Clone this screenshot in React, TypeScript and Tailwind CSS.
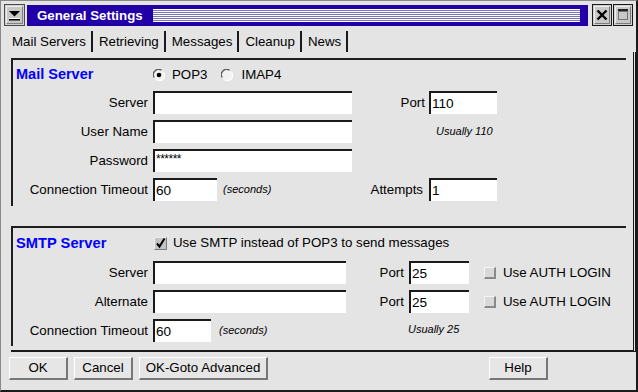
import React from "react";

function Field({ cls, value, pw }: { cls: string; value?: string; pw?: boolean }) {
  return (
    <div
      className={`${cls} h-[23px] bg-white border-t-2 border-l-2 border-[#1a1a1a] flex ${pw ? "items-start pt-[1px]" : "items-center"} pl-[1px] text-black`}
    >
      {pw ? <span className="text-[12px] leading-[14px] tracking-[-0.5px]">******</span> : <span className="text-[13.6px] leading-none">{value}</span>}
    </div>
  );
}

function Radio({ on }: { on?: boolean }) {
  return (
    <svg width="12" height="12" viewBox="0 0 12 12" className="shrink-0">
      <circle cx="6" cy="6" r="5.5" fill="#f2f2f2" />
      <path d="M1.2 8.5 A5.3 5.3 0 0 1 8.5 1.2" fill="none" stroke="#5a5a5a" strokeWidth="1.3" />
      <path d="M3.5 10.8 A5.3 5.3 0 0 0 10.8 3.5" fill="none" stroke="#ffffff" strokeWidth="1.3" />
      {on && <circle cx="6" cy="6" r="2.3" fill="#000" />}
    </svg>
  );
}

function Check() {
  return (
    <svg width="13" height="13" viewBox="0 0 13 13" className="shrink-0">
      <rect x="0" y="0" width="13" height="13" fill="#c4c4c4" />
      <path d="M0.5 12.5 V0.5 H12.5" fill="none" stroke="#ededed" strokeWidth="1" />
      <path d="M0.5 12.5 H12.5 V0.5" fill="none" stroke="#7c7c7c" strokeWidth="1" />
      <path d="M3 6.5 L5.5 9.5 L10.5 1.5" fill="none" stroke="#000" strokeWidth="2" />
    </svg>
  );
}

function AuthBox() {
  return (
    <div className="w-[12px] h-[12px] shrink-0 bg-[#d9d9d9] border-t border-l border-t-[#f4f4f4] border-l-[#f4f4f4] border-b-2 border-r-2 border-b-[#8a8a8a] border-r-[#8a8a8a]" />
  );
}

function Btn({ cls, label }: { cls: string; label: string }) {
  return (
    <div
      className={`${cls} h-[23px] flex items-center justify-center text-[13.3px] text-black border-t border-l border-t-white border-l-white border-b-2 border-r-2 border-b-[#777] border-r-[#777] bg-[#e6e6e6]`}
    >
      {label}
    </div>
  );
}

export default function App() {
  return (
    <div className="w-[638px] h-[392px] bg-[#e4e4e4] border-l border-t border-l-[#8a8a8a] border-t-[#8a8a8a] border-r-2 border-b-2 border-r-[#1a1a1a] border-b-[#1a1a1a] font-['Liberation_Sans',Arial,sans-serif] text-black overflow-hidden select-none">
      {/* Title row */}
      <div className="flex items-start mt-[3px] ml-[3px] mr-[3px] h-[22px]">
        <div className="w-[21px] h-[22px] border border-[#4a4a4a] bg-[#cfcfcf] flex items-center justify-center">
          <svg width="17" height="18" viewBox="0 0 17 18">
            <rect x="0" y="0" width="17" height="18" fill="#c8c8c8" />
            <path d="M0.5 17.5 V0.5 H16.5" fill="none" stroke="#f0f0f0" />
            <path d="M0.5 17.5 H16.5 V0.5" fill="none" stroke="#808080" />
            <polygon points="3,5 14,5 8.5,10.5" fill="#000" />
            <rect x="3" y="12" width="11" height="1" fill="#fff" />
            <rect x="3" y="13" width="11" height="1.5" fill="#000" />
          </svg>
        </div>
        <div className="ml-[2px] mt-[1px] w-[561px] h-[21px] bg-[#2200a8] flex items-center">
          <span className="pl-[10px] text-white font-bold text-[13.3px] leading-none whitespace-nowrap">General Settings</span>
          <div className="ml-[10px] mr-[8px] flex-1 h-[13px] bg-[repeating-linear-gradient(to_bottom,#ffffff_0px,#ffffff_1px,#7878b4_1px,#7878b4_2px)]" />
        </div>
        <div className="ml-[4px] w-[20px] h-[22px] border border-[#1a1a1a] bg-[#d0d0d0] flex items-center justify-center">
          <svg width="16" height="18" viewBox="0 0 16 18">
            <rect x="0" y="0" width="16" height="18" fill="#c8c8c8" />
            <path d="M0.5 17.5 V0.5 H15.5" fill="none" stroke="#f0f0f0" />
            <path d="M0.5 17.5 H15.5 V0.5" fill="none" stroke="#7a7a7a" />
            <path d="M3.5 4.5 L12.5 13.5 M12.5 4.5 L3.5 13.5" stroke="#000" strokeWidth="2.4" />
          </svg>
        </div>
        <div className="ml-[1px] w-[20px] h-[22px] border border-[#1a1a1a] bg-[#d0d0d0] flex items-center justify-center">
          <svg width="16" height="18" viewBox="0 0 16 18">
            <rect x="0" y="0" width="16" height="18" fill="#c8c8c8" />
            <path d="M0.5 17.5 V0.5 H15.5" fill="none" stroke="#f0f0f0" />
            <path d="M0.5 17.5 H15.5 V0.5" fill="none" stroke="#7a7a7a" />
            <rect x="3" y="3" width="10" height="2" fill="#222" />
            <rect x="3.5" y="5.5" width="9" height="8" fill="none" stroke="#222" strokeDasharray="1 1" />
          </svg>
        </div>
      </div>

      {/* Tabs */}
      <div className="flex mt-[5px] ml-[5px] h-[21px] text-[13.3px] leading-none">
        {["Mail Servers", "Retrieving", "Messages", "Cleanup", "News"].map((t) => (
          <div key={t} className="h-[21px] pl-[6px] pr-[5px] pt-[4px] border-r-2 border-r-[#1a1a1a] whitespace-nowrap">
            {t}
          </div>
        ))}
      </div>

      {/* Panel */}
      <div className="ml-[10px] w-[625px] h-[300px] border-r-[3px] border-double border-r-[#1a1a1a] border-b-2 border-b-[#1a1a1a] pt-[6px]">
        {/* Mail Server group */}
        <div className="w-[615px] h-[148px] border-t-2 border-l-2 border-[#1e1e1e] text-[13.3px] leading-none">
          <div className="h-[29px] flex items-center">
            <div className="w-[140px] pl-[3px] text-[#0000ff] font-bold text-[14.5px]">Mail Server</div>
            <Radio on />
            <span className="ml-[7px]">POP3</span>
            <div className="ml-[14px]"><Radio /></div>
            <span className="ml-[8px]">IMAP4</span>
          </div>
          <div className="mt-[2px] flex flex-col gap-[6px]">
            <div className="flex items-center h-[23px]">
              <div className="w-[135px] text-right">Server</div>
              <div className="ml-[5px]"><Field cls="w-[199px]" /></div>
              <div className="w-[73px] text-right">Port</div>
              <div className="ml-[4px]"><Field cls="w-[68px]" value="110" /></div>
            </div>
            <div className="flex items-center h-[23px]">
              <div className="w-[135px] text-right">User Name</div>
              <div className="ml-[5px]"><Field cls="w-[199px]" /></div>
              <div className="ml-[84px] italic text-[11px]">Usually 110</div>
            </div>
            <div className="flex items-center h-[23px]">
              <div className="w-[135px] text-right">Password</div>
              <div className="ml-[5px]"><Field cls="w-[199px]" pw /></div>
            </div>
            <div className="flex items-center h-[23px]">
              <div className="w-[135px] text-right whitespace-nowrap">Connection Timeout</div>
              <div className="ml-[5px]"><Field cls="w-[64px]" value="60" /></div>
              <div className="w-[206px] flex items-center">
                <span className="pl-[6px] italic text-[11px]">(seconds)</span>
                <span className="ml-auto">Attempts</span>
              </div>
              <div className="ml-[6px]"><Field cls="w-[68px]" value="1" /></div>
            </div>
          </div>
        </div>

        {/* SMTP group */}
        <div className="mt-[20px] w-[615px] h-[120px] border-t-2 border-l-2 border-[#1e1e1e] text-[13.3px] leading-none">
          <div className="h-[30px] flex items-center">
            <div className="w-[141px] pl-[3px] text-[#0000ff] font-bold text-[14.7px] whitespace-nowrap">SMTP Server</div>
            <Check />
            <span className="ml-[6px] whitespace-nowrap">Use SMTP instead of POP3 to send messages</span>
          </div>
          <div className="mt-[3px] flex flex-col gap-[6px]">
            {["Server", "Alternate"].map((l) => (
              <div key={l} className="flex items-center h-[23px]">
                <div className="w-[135px] text-right">{l}</div>
                <div className="ml-[5px]"><Field cls="w-[193px]" /></div>
                <div className="w-[58px] text-right">Port</div>
                <div className="ml-[5px]"><Field cls="w-[60px]" value="25" /></div>
                <div className="ml-[15px]"><AuthBox /></div>
                <span className="ml-[7px] whitespace-nowrap">Use AUTH LOGIN</span>
              </div>
            ))}
            <div className="flex items-center h-[23px]">
              <div className="w-[135px] text-right whitespace-nowrap">Connection Timeout</div>
              <div className="ml-[5px]"><Field cls="w-[58px]" value="60" /></div>
              <div className="w-[197px] pl-[8px] italic text-[11px]">(seconds)</div>
              <span className="italic text-[11px] mt-[-3px]">Usually 25</span>
            </div>
          </div>
        </div>
      </div>

      {/* Buttons */}
      <div className="flex mt-[5px] ml-[8px]">
        <Btn cls="w-[59px]" label="OK" />
        <div className="ml-[6px]"><Btn cls="w-[59px]" label="Cancel" /></div>
        <div className="ml-[6px]"><Btn cls="w-[129px]" label="OK-Goto Advanced" /></div>
        <div className="ml-[221px]"><Btn cls="w-[59px]" label="Help" /></div>
      </div>
    </div>
  );
}
